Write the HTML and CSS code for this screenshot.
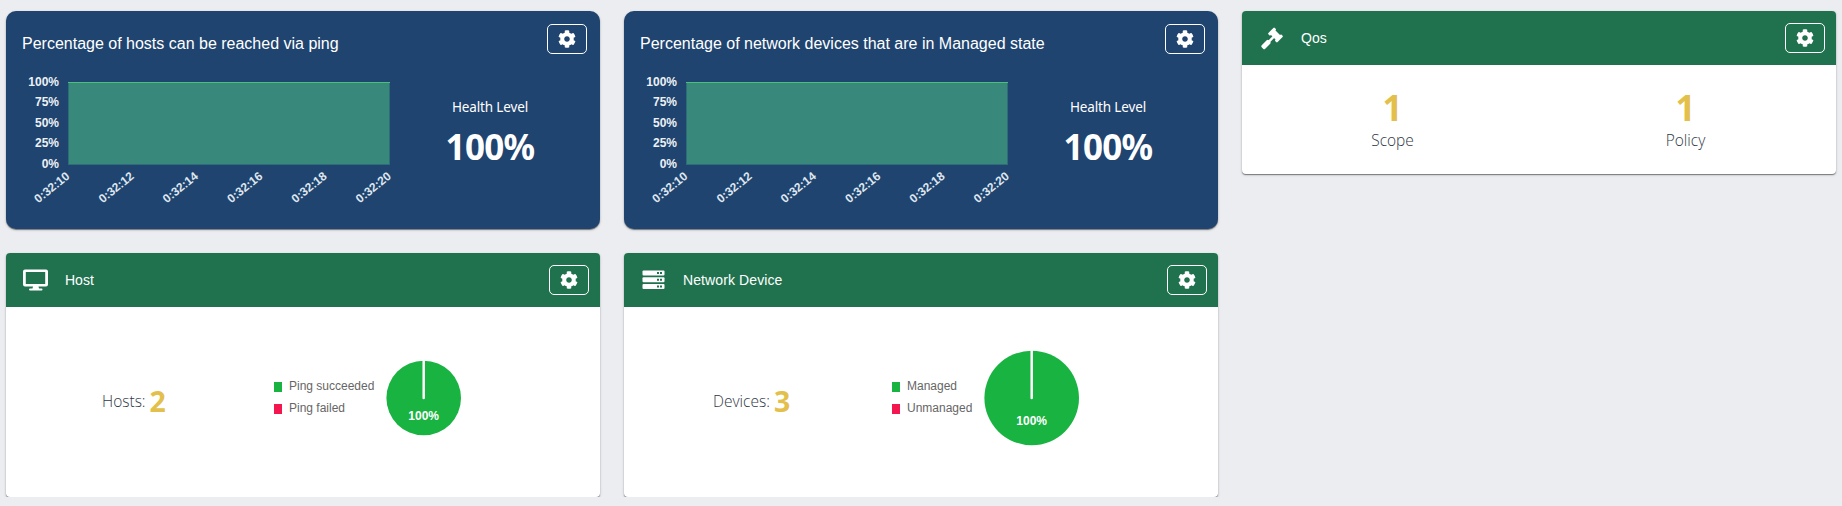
FILE: index.html
```html
<!DOCTYPE html>
<html lang="en">
<head>
<meta charset="utf-8">
<title>Dashboard</title>
<link rel="stylesheet" href="styles.css">
</head>
<body>
<svg width="0" height="0" class="defs">
  <symbol id="gear" viewBox="0 0 512 512"><path fill="currentColor" d="M487.4 315.7l-42.6-24.600c4.300-23.200 4.300-47 0-70.200l42.600-24.600c4.900-2.800 7.100-8.600 5.500-14-11.100-35.600-30-67.800-54.700-94.600-3.800-4.100-10-5.100-14.800-2.300L380.800 110c-17.900-15.400-38.500-27.300-60.800-35.100V25.800c0-5.600-3.900-10.500-9.400-11.700-36.700-8.200-74.300-7.800-109.200 0-5.500 1.200-9.400 6.100-9.400 11.700V75c-22.200 7.900-42.800 19.800-60.800 35.100L88.700 85.500c-4.900-2.800-11-1.900-14.800 2.300-24.700 26.700-43.600 58.900-54.700 94.600-1.700 5.400.6 11.200 5.500 14L67.300 221c-4.300 23.200-4.300 47 0 70.200l-42.600 24.600c-4.900 2.800-7.100 8.600-5.500 14 11.100 35.600 30 67.800 54.700 94.600 3.800 4.100 10 5.100 14.800 2.300l42.600-24.600c17.900 15.400 38.500 27.300 60.800 35.100v49.200c0 5.600 3.900 10.500 9.400 11.700 36.700 8.200 74.300 7.800 109.200 0 5.500-1.200 9.400-6.100 9.400-11.700v-49.200c22.200-7.900 42.800-19.800 60.800-35.100l42.600 24.600c4.900 2.800 11 1.900 14.800-2.300 24.700-26.700 43.600-58.900 54.700-94.600 1.500-5.500-.7-11.300-5.600-14.100zM256 336c-44.100 0-80-35.900-80-80s35.900-80 80-80 80 35.900 80 80-35.900 80-80 80z"/></symbol>
</svg>
<main class="grid">
  <section class="card health">
    <header class="health-head"><h2>Percentage of hosts can be reached via ping</h2><button class="gear-btn"><svg><use href="#gear"/></svg></button></header>
    <div class="health-body">
      <svg class="area" viewBox="0 0 400 150">
        <rect class="plot" x="62.500" y="11.500" width="321" height="82"/>
        <path class="topline" d="M62 11.500H384"/>
        <g class="axis" text-anchor="end">
          <text x="53" y="15">100%</text><text x="53" y="35">75%</text><text x="53" y="56">50%</text><text x="53" y="76">25%</text><text x="53" y="97">0%</text>
        </g>
        <g class="axis ticks" text-anchor="end">
          <text transform="translate(64.500 106.500) rotate(-39)">0:32:10</text>
          <text transform="translate(128.800 106.500) rotate(-39)">0:32:12</text>
          <text transform="translate(193 106.500) rotate(-39)">0:32:14</text>
          <text transform="translate(257.400 106.500) rotate(-39)">0:32:16</text>
          <text transform="translate(321.700 106.500) rotate(-39)">0:32:18</text>
          <text transform="translate(386 106.500) rotate(-39)">0:32:20</text>
        </g>
      </svg>
      <div class="level"><span class="level-label">Health Level</span><strong>100%</strong></div>
    </div>
  </section>
  <section class="card health">
    <header class="health-head"><h2>Percentage of network devices that are in Managed state</h2><button class="gear-btn"><svg><use href="#gear"/></svg></button></header>
    <div class="health-body">
      <svg class="area" viewBox="0 0 400 150">
        <rect class="plot" x="62.500" y="11.500" width="321" height="82"/>
        <path class="topline" d="M62 11.500H384"/>
        <g class="axis" text-anchor="end">
          <text x="53" y="15">100%</text><text x="53" y="35">75%</text><text x="53" y="56">50%</text><text x="53" y="76">25%</text><text x="53" y="97">0%</text>
        </g>
        <g class="axis ticks" text-anchor="end">
          <text transform="translate(64.500 106.500) rotate(-39)">0:32:10</text>
          <text transform="translate(128.800 106.500) rotate(-39)">0:32:12</text>
          <text transform="translate(193 106.500) rotate(-39)">0:32:14</text>
          <text transform="translate(257.400 106.500) rotate(-39)">0:32:16</text>
          <text transform="translate(321.700 106.500) rotate(-39)">0:32:18</text>
          <text transform="translate(386 106.500) rotate(-39)">0:32:20</text>
        </g>
      </svg>
      <div class="level"><span class="level-label">Health Level</span><strong>100%</strong></div>
    </div>
  </section>
  <section class="card qos">
    <header class="bar">
      <svg class="icon" viewBox="0 0 28 28"><g fill="#fff" transform="translate(17.500 11) rotate(-45)"><rect x="-4.500" y="-6.500" width="9" height="3.200" rx="1"/><rect x="-3.200" y="-5" width="6.400" height="10"/><rect x="-4.500" y="3.300" width="9" height="3.200" rx="1"/><rect x="-10" y="-1.200" width="8" height="2.400"/><rect x="-18.500" y="-2.500" width="10" height="5" rx="1.500"/></g></svg>
      <h3>Qos</h3><button class="gear-btn"><svg><use href="#gear"/></svg></button>
    </header>
    <div class="counts">
      <div class="count"><strong>1</strong><span>Scope</span></div>
      <div class="count"><strong>1</strong><span>Policy</span></div>
    </div>
  </section>
  <section class="card">
    <header class="bar">
      <svg class="icon" viewBox="0 0 28 28"><path fill="#fff" fill-rule="evenodd" d="M3 3.500h21a2 2 0 0 1 2 2v13a2 2 0 0 1-2 2H16.500l.5 2H19.500a1 1 0 0 1 0 2H8a1 1 0 0 1 0-2h2.500l.5-2H3a2 2 0 0 1-2-2v-13a2 2 0 0 1 2-2zm.8 2.500v12h19.400V6z"/></svg>
      <h3>Host</h3><button class="gear-btn"><svg><use href="#gear"/></svg></button>
    </header>
    <div class="status">
      <p class="total hosts"><span>Hosts:</span><strong>2</strong></p>
      <svg class="pie" viewBox="0 0 230 100">
        <rect class="ok" x="6" y="34" width="8" height="10"/><text x="21" y="42">Ping succeeded</text>
        <rect class="bad" x="6" y="56" width="8" height="10"/><text x="21" y="64">Ping failed</text>
        <circle class="ok" cx="155.700" cy="50" r="37.300"/><path class="slit" d="M155.700 12V50"/>
        <text class="pct" x="155.700" y="72">100%</text>
      </svg>
    </div>
  </section>
  <section class="card">
    <header class="bar">
      <svg class="icon" viewBox="0 0 28 28"><g transform="translate(2 0)"><rect x=".5" y="4.500" width="22" height="5" rx="1" fill="#fff"/><rect x=".5" y="11.200" width="22" height="5" rx="1" fill="#fff"/><rect x=".5" y="17.900" width="22" height="5" rx="1" fill="#fff"/><path fill="#20724e" d="M15 6h2v2h-2zm3 0h2v2h-2zM15 12.700h2v2h-2zm3 0h2v2h-2zM15 19.400h2v2h-2zm3 0h2v2h-2z"/></g></svg>
      <h3 class="wide">Network Device</h3><button class="gear-btn"><svg><use href="#gear"/></svg></button>
    </header>
    <div class="status">
      <p class="total devices"><span>Devices:</span><strong>3</strong></p>
      <svg class="pie" viewBox="0 0 230 100">
        <rect class="ok" x="6" y="34" width="8" height="10"/><text x="21" y="42">Managed</text>
        <rect class="bad" x="6" y="56" width="8" height="10"/><text x="21" y="64">Unmanaged</text>
        <circle class="ok" cx="145.700" cy="50" r="47.300"/><path class="slit" d="M145.700 2V50"/>
        <text class="pct" x="145.700" y="77">100%</text>
      </svg>
    </div>
  </section>
</main>
</body>
</html>
```
FILE: styles.css
```css
* { box-sizing: border-box; }
body { margin: 0; background: #ecedf1; font-family: "Liberation Sans", Arial, sans-serif; }
h2, h3, p { margin: 0; font-weight: 400; }
.defs { display: block; }
.grid { display: grid; grid-template-columns: repeat(3, 594px); gap: 24px; padding: 11px 6px 0; align-items: start; }
.card { background: #fff; border-radius: 4px; overflow: hidden; height: 244px; box-shadow: 0 1px 1px rgba(0, 0, 0, .42), 0 1px 3px rgba(0, 0, 0, .18); }
.qos { height: 163px; }
.health { height: 218px; border-radius: 10px; background: #1f4470; color: #fff; }
.health-head { display: flex; justify-content: space-between; height: 60px; padding: 13px 13px 0 16px; }
.health-head h2 { font-size: 16px; line-height: 40px; }
.gear-btn { display: flex; align-items: center; justify-content: center; width: 40px; height: 30px; padding: 0; border: 1px solid #fff; border-radius: 5px; background: none; color: #fff; }
.gear-btn svg { width: 18px; height: 18px; }
.health-body { display: flex; }
.area { width: 400px; height: 150px; }
.plot { fill: #38897c; stroke: #2e6c78; }
.topline { stroke: #4bc07a; fill: none; }
.axis { font-size: 12px; font-weight: 700; fill: #edf1f5; }
.ticks { fill: #dfe6ee; }
.level { display: flex; flex-direction: column; align-items: center; width: 168px; padding-top: 25px; font-family: "Noto Sans", sans-serif; }
.level-label { font-size: 13.5px; line-height: 22px; letter-spacing: -.15px; }
.level strong { font-size: 35px; line-height: 48px; letter-spacing: -.7px; margin-top: 5px; }
.bar { display: flex; align-items: center; height: 54px; padding: 0 11px 0 16px; background: #20724e; color: #fff; }
.icon { width: 28px; height: 28px; }
.bar h3 { margin: 0 auto 0 15px; font-size: 14px; line-height: 20px; }
.bar .wide { letter-spacing: .1px; }
.counts { display: flex; padding: 20px 0 0 4px; font-family: "Noto Sans", sans-serif; }
.count { display: flex; flex-direction: column; align-items: center; width: 293px; }
.count strong { font-size: 35px; line-height: 46px; color: #e3c04b; }
.count span { margin-top: -1px; font-size: 15.5px; line-height: 20px; font-family: "Open Sans", sans-serif; font-weight: 350; color: #303846; }
.status { display: flex; align-items: center; height: 182px; }
.total { display: flex; width: 262px; height: 40px; font-family: "Open Sans", sans-serif; font-weight: 350; font-size: 15.5px; line-height: 40px; color: #303846; margin-top: 2px; }
.total span { margin-top: 2px; }
.total strong { margin: 2px 0 0 4px; font-family: "Noto Sans", sans-serif; font-weight: 700; font-size: 28.5px; color: #e3c04b; }
.hosts { padding-left: 96px; }
.devices { padding-left: 89px; }
.pie { width: 230px; height: 100px; font-size: 12px; }
.pie text { fill: #666; }
.pie .pct { fill: #fff; font-weight: 700; text-anchor: middle; }
.ok { fill: #19b341; }
.bad { fill: #f4174f; }
.slit { stroke: #fff; stroke-width: 2.500; stroke-linecap: round; }
```
